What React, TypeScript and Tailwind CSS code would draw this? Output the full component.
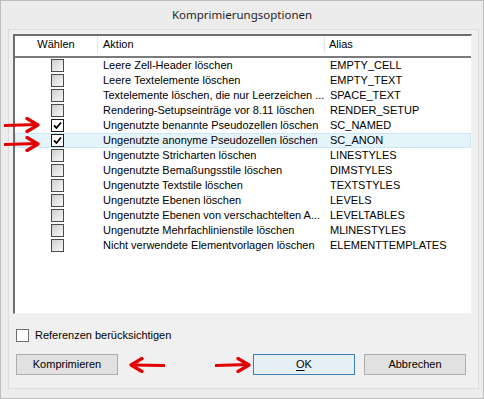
import React from "react";

const rows: [string, string, boolean][] = [
  ["Leere Zell-Header löschen", "EMPTY_CELL", false],
  ["Leere Textelemente löschen", "EMPTY_TEXT", false],
  ["Textelemente löschen, die nur Leerzeichen ...", "SPACE_TEXT", false],
  ["Rendering-Setupseinträge vor 8.11 löschen", "RENDER_SETUP", false],
  ["Ungenutzte benannte Pseudozellen löschen", "SC_NAMED", true],
  ["Ungenutzte anonyme Pseudozellen löschen", "SC_ANON", true],
  ["Ungenutzte Stricharten löschen", "LINESTYLES", false],
  ["Ungenutzte Bemaßungsstile löschen", "DIMSTYLES", false],
  ["Ungenutzte Textstile löschen", "TEXTSTYLES", false],
  ["Ungenutzte Ebenen löschen", "LEVELS", false],
  ["Ungenutzte Ebenen von verschachtelten A...", "LEVELTABLES", false],
  ["Ungenutzte Mehrfachlinienstile löschen", "MLINESTYLES", false],
  ["Nicht verwendete Elementvorlagen löschen", "ELEMENTTEMPLATES", false],
];

function Box({ checked }: { checked: boolean }) {
  if (checked) {
    return (
      <div className="w-[13px] h-[13px] border border-[#1a1a1a] bg-white flex items-center justify-center">
        <svg width="9" height="9" viewBox="0 0 9 9">
          <path d="M1 4.5 L3.5 7 L8 1.5" stroke="#000" strokeWidth="1.8" fill="none" />
        </svg>
      </div>
    );
  }
  return (
    <div className="w-[13px] h-[13px] border border-[#4a4a4a] bg-gradient-to-br from-[#cfcfcf] to-[#f8f8f8]" />
  );
}

function ArrowRight({ className }: { className: string }) {
  return (
    <svg className={className} width="36" height="16" viewBox="0 0 36 16">
      <path d="M1 8.5 L33 7.5" stroke="#e30000" strokeWidth="3.2" fill="none" strokeLinecap="round" />
      <path d="M23 1.5 L34 8 L23 14.5" stroke="#e30000" strokeWidth="3.2" fill="none" strokeLinecap="round" strokeLinejoin="round" />
    </svg>
  );
}

function ArrowLeft({ className }: { className: string }) {
  return (
    <svg className={className} width="36" height="16" viewBox="0 0 36 16">
      <path d="M3 8 L35 8.5" stroke="#e30000" strokeWidth="3.2" fill="none" strokeLinecap="round" />
      <path d="M13 1.5 L2 8 L13 14.5" stroke="#e30000" strokeWidth="3.2" fill="none" strokeLinecap="round" strokeLinejoin="round" />
    </svg>
  );
}

export default function App() {
  return (
    <div
      className="relative w-[484px] h-[399px] bg-[#ececec] border border-[#bdbdbd] flex flex-col text-black"
      style={{ fontFamily: '"Liberation Sans", Arial, sans-serif' }}
    >
      <div
        className="h-[28px] flex items-center justify-center text-[11.5px] text-[#1e1e1e]"
        style={{ fontFamily: '"Noto Sans", "Open Sans", sans-serif' }}
      >
        Komprimierungsoptionen
      </div>
      <div className="ml-[7px] mr-[4px] h-[360px] bg-[#f0f0f0] border border-[#dcdcdc] flex flex-col pl-[4px] pt-[4px] pr-[6px]">
        {/* list */}
        <div className="h-[280px] bg-white border-t-2 border-l-2 border-r border-b border-t-[#6e6e6e] border-l-[#6e6e6e] border-r-[#f4f4f4] border-b-[#f4f4f4] flex flex-col text-[11px]">
          <div className="h-[22px] flex border-b-2 border-[#7b7b7b] pb-[3px]">
            <div className="w-[83px] flex items-center justify-center border-r border-[#e5e5e5]">Wählen</div>
            <div className="w-[227px] flex items-center pl-[5px] border-r border-[#e5e5e5]">Aktion</div>
            <div className="flex-1 flex items-center pl-[4px]">Alias</div>
          </div>
          <div className="flex flex-col">
            {rows.map(([a, b, c], i) => (
              <div
                key={i}
                className={
                  "h-[15px] flex items-center border " +
                  (i === 5 ? "bg-[#e5f3fb] border-[#cbe8f6]" : "border-transparent")
                }
              >
                <div className="w-[82px] flex justify-center pl-[1px]">
                  <Box checked={c} />
                </div>
                <div className="w-[227px] pl-[5px] leading-[15px] whitespace-nowrap">{a}</div>
                <div className="flex-1 pl-[5px] leading-[15px] whitespace-nowrap">{b}</div>
              </div>
            ))}
          </div>
        </div>
        <div className="mt-[15px] ml-[3px] flex items-center gap-[6px] text-[11px] h-[13px]">
          <div className="w-[13px] h-[13px] border border-[#707070] bg-white" />
          <span>Referenzen berücksichtigen</span>
        </div>
        <div className="mt-[12px] ml-[3px] flex items-center text-[11px]">
          <div className="w-[102px] h-[21px] border border-[#adadad] bg-[#e1e1e1] flex items-center justify-center">
            Komprimieren
          </div>
          <div className="flex-1" />
          <div className="w-[102px] h-[21px] border border-[#3c7fb1] bg-[#e5eff7] flex items-center justify-center">
            <span className="underline underline-offset-2">O</span>K
          </div>
          <div className="w-[102px] h-[21px] border border-[#adadad] bg-[#e1e1e1] flex items-center justify-center ml-[9px] mr-[6px]">
            Abbrechen
          </div>
        </div>
      </div>
      <ArrowRight className="absolute left-[3px] top-[116px]" />
      <ArrowRight className="absolute left-[3px] top-[135px]" />
      <ArrowLeft className="absolute left-[128px] top-[356px]" />
      <ArrowRight className="absolute left-[214px] top-[356px]" />
    </div>
  );
}
